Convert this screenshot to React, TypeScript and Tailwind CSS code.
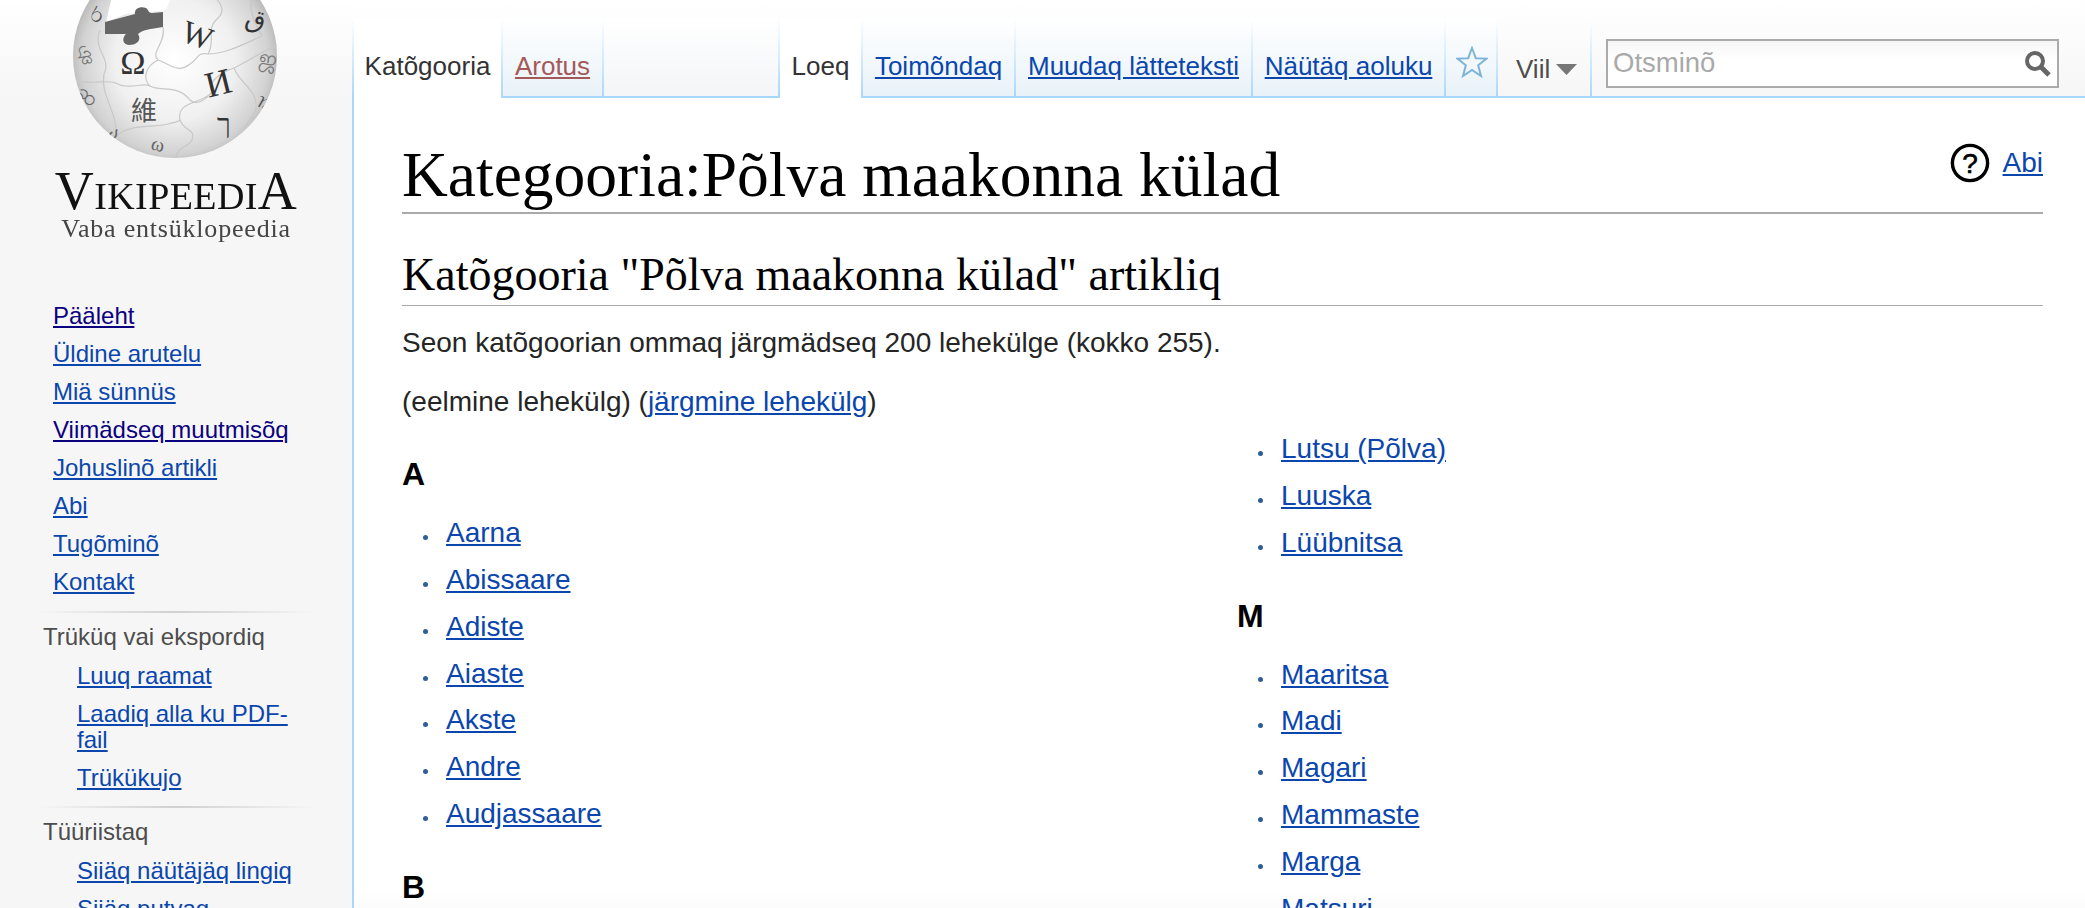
const mainNav = [
  { label: "Pääleht", visited: true },
  { label: "Üldine arutelu" },
  { label: "Miä sünnüs" },
  { label: "Viimädseq muutmisõq", visited: true },
  { label: "Johuslinõ artikli" },
  { label: "Abi" },
  { label: "Tugõminõ" },
  { label: "Kontakt" },
];

const leftColumn = [
  { letter: "A", items: ["Aarna", "Abissaare", "Adiste", "Aiaste", "Akste", "Andre", "Audjassaare"] },
  { letter: "B", items: [] },
];

function Globe() {
  return (
    <svg width="352" height="165" viewBox="0 0 352 165" className="block">
      <defs>
        <radialGradient id="globeFill" cx="0.5" cy="0.52" r="0.54">
          <stop offset="0" stopColor="#ffffff" />
          <stop offset="0.55" stopColor="#f0f0f0" />
          <stop offset="0.85" stopColor="#d2d2d2" />
          <stop offset="1" stopColor="#adadad" />
        </radialGradient>
        <clipPath id="globeClip">
          <circle cx="175" cy="56" r="102" />
        </clipPath>
      </defs>
      <circle cx="175" cy="56" r="102" fill="url(#globeFill)" />
      <g clipPath="url(#globeClip)">
        {/* missing piece on top */}
        <path d="M112 -4 L172 -4 L166 10 L126 14 L106 22 Z" fill="#ffffff" />
        <path
          d="M105 22 L135 14 C134 9 140 6 146 8 C149 10 148 13 152 13 L163 12 L163 27 C150 29 142 30 138 34 C142 40 137 45 129 45 C122 44 122 38 126 34 L105 34 Z"
          fill="#666666"
        />
        <g fill="none" stroke="#c8c8c8" strokeWidth="1.2">
          <path d="M75 80 C95 86 108 78 118 84 C128 90 145 82 150 86 C160 92 178 84 190 100 C196 106 206 100 212 92 C206 82 222 72 234 68 C250 60 268 48 280 44" />
          <path d="M163 27 C166 44 150 52 158 60 C170 64 178 74 190 64 C200 58 196 52 208 54 C224 54 240 46 262 36" />
          <path d="M100 30 C92 50 112 58 104 74 C100 96 118 112 116 136" />
          <path d="M212 92 C204 104 176 100 180 120 C184 132 196 128 192 140 C188 148 176 146 176 160" />
          <path d="M208 54 C216 40 206 30 216 20 C226 12 222 4 214 -4" />
          <path d="M234 68 C240 84 258 90 256 108 C254 120 242 124 240 140" />
          <path d="M158 60 C146 66 142 78 150 86" />
          <path d="M116 136 C130 124 150 128 168 124 C176 122 178 122 180 120" />
          <path d="M262 36 C254 22 248 10 252 -6" />
        </g>
        <g fill="#333333" fontFamily="Liberation Serif, serif" textAnchor="middle">
          <text x="133" y="74" fontSize="34">Ω</text>
          <text x="197" y="46" fontSize="32" transform="rotate(20 197 36)">W</text>
          <text x="218" y="95" fontSize="36" transform="rotate(-14 218 82)">И</text>
          <text x="144" y="120" fontSize="26" fill="#555555" fontFamily="Noto Sans CJK SC, sans-serif">維</text>
          <text x="224" y="133" fontSize="28">ך</text>
          <text x="85" y="62" fontSize="20" fill="#777777" transform="rotate(80 85 55)">ঞ</text>
          <text x="88" y="102" fontSize="22" fill="#666666" transform="rotate(40 88 95)">ဆ</text>
          <text x="256" y="28" fontSize="26" transform="rotate(15 256 20)">ق</text>
          <text x="268" y="66" fontSize="22" fill="#777777" transform="rotate(10 268 58)">ஜ</text>
          <text x="262" y="110" fontSize="20" fill="#555555" transform="rotate(-60 262 102)">ವ</text>
          <text x="158" y="151" fontSize="20" fill="#666666" transform="rotate(15 158 145)">ω</text>
          <text x="115" y="140" fontSize="18" fill="#666666" transform="rotate(40 115 133)">ა</text>
          <text x="96" y="22" fontSize="20" fill="#555555" transform="rotate(-30 96 15)">ර</text>
        </g>
      </g>
    </svg>
  );
}

function Logo() {
  return (
    <div className="h-[280px]">
      <Globe />
      <div className="mt-[3px] flex justify-center items-baseline font-['Liberation_Serif',serif] text-[#111] h-[46px] leading-[46px] tracking-[0.4px] blur-[0.3px]">
        <span className="text-[54px]">V</span>
        <span className="text-[38px]">IKIPEEDI</span>
        <span className="text-[54px]">A</span>
      </div>
      <div className="text-center font-['Liberation_Serif',serif] text-[26px] leading-[30px] text-[#444] tracking-[0.8px] blur-[0.3px]">
        Vaba entsüklopeedia
      </div>
    </div>
  );
}

function NavLink({ label, visited }: { label: string; visited?: boolean }) {
  return (
    <li className="h-[38px] leading-[38px]">
      <a href="#" className={visited ? "underline text-[#0b0080]" : "underline text-[#0a46ad]"}>
        {label}
      </a>
    </li>
  );
}

function Portal({ title, items }: { title: string; items: string[] }) {
  return (
    <div>
      <div className="mx-[37px] h-[2px] w-[279px] bg-linear-to-r from-transparent via-[#d0d0d0] to-transparent" />
      <h3 className="ml-[43px] mt-[11px] h-[26px] leading-[26px] text-[#4d4d4d]">{title}</h3>
      <ul className="ml-[77px] w-[240px] pt-[7px] pb-[9px] leading-[26px]">
        {items.map((item) => (
          <li key={item} className="py-[6px]">
            <a href="#" className="underline text-[#0a46ad]">
              {item}
            </a>
          </li>
        ))}
      </ul>
    </div>
  );
}

function Sidebar() {
  return (
    <aside className="w-[352px] shrink-0 text-[24px] bg-linear-to-b from-white to-[#f6f6f6] to-[100px]">
      <Logo />
      <ul className="ml-[53px] pt-[17px] pb-[10px]">
        {mainNav.map((item) => (
          <NavLink key={item.label} label={item.label} visited={item.visited} />
        ))}
      </ul>
      <Portal title="Trüküq vai ekspordiq" items={["Luuq raamat", "Laadiq alla ku PDF-fail", "Trükükujo"]} />
      <Portal title="Tüüriistaq" items={["Siiäq näütäjäq lingiq", "Siiäq putvaq"]} />
    </aside>
  );
}

function Separator() {
  return <div className="w-[2px] shrink-0 bg-linear-to-b from-white to-[#a7d7f9]" />;
}

function Tab({ label, selected, red, width }: { label: string; selected?: boolean; red?: boolean; width: string }) {
  const bg = selected ? "bg-white" : "bg-linear-to-b from-white to-[#e8f2f8] border-b-2 border-[#a7d7f9]";
  const color = selected ? "text-[#333]" : red ? "text-[#a55858] underline" : "text-[#0a46ad] underline";
  return (
    <div className={`${width} ${bg} h-full shrink-0 pt-[29px] text-center leading-[38px]`}>
      <a href="#" className={color}>
        {label}
      </a>
    </div>
  );
}

function TabBar() {
  return (
    <div className="flex h-[98px] shrink-0 pt-[18px] text-[26px] bg-linear-to-b from-white to-[#f6f6f6]">
      <Separator />
      <Tab label="Katõgooria" selected width="w-[147px]" />
      <Separator />
      <Tab label="Arotus" red width="w-[99px]" />
      <Separator />
      <div className="w-[174px] shrink-0 border-b-2 border-[#a7d7f9] bg-linear-to-b from-white to-[#f3f5f7]" />
      <Separator />
      <Tab label="Loeq" selected width="w-[81px]" />
      <Separator />
      <Tab label="Toimõndaq" width="w-[151px]" />
      <Separator />
      <Tab label="Muudaq lätteteksti" width="w-[235px]" />
      <Separator />
      <Tab label="Näütäq aoluku" width="w-[191px]" />
      <Separator />
      <div className="w-[50px] shrink-0 border-b-2 border-[#a7d7f9] bg-linear-to-b from-white to-[#e8f2f8] pl-[10px] pt-[28px]">
        <svg width="32" height="32" viewBox="0 0 32 32" fill="none" stroke="#7cb5d8" strokeWidth="2">
          <path d="M16 2 L19.8 12.2 L30.5 12.6 L22.2 19.3 L25 30 L16 24 L7 30 L9.8 19.3 L1.5 12.6 L12.2 12.2 Z" />
        </svg>
      </div>
      <Separator />
      <div className="flex w-[92px] shrink-0 border-b-2 border-[#a7d7f9] pl-[18px] pt-[32px] text-[#4d4d4d]">
        <span className="leading-[38px]">Viil</span>
        <svg width="21" height="11" viewBox="0 0 21 11" className="ml-[6px] mt-[14px]">
          <path d="M0 0 H21 L10.5 11 Z" fill="#777777" />
        </svg>
      </div>
      <Separator />
      <div className="flex-1 border-b-2 border-[#a7d7f9] pl-[14px] pr-[26px] pt-[21px]">
        <div className="flex h-[49px] items-center justify-between border-2 border-[#aaaaaa] bg-linear-to-b from-[#f5f5f5] to-white to-[40%] pl-[5px] pr-[6px]">
          <span className="-mt-[2px] text-[27.5px] text-[#a9a9a9]">Otsminõ</span>
          <svg width="27" height="27" viewBox="0 0 27 27" fill="none" stroke="#666666">
            <circle cx="11" cy="11" r="8" strokeWidth="4" />
            <path d="M17 17 L25 25" strokeWidth="5" />
          </svg>
        </div>
      </div>
    </div>
  );
}

function CategoryItem({ label }: { label: string }) {
  return (
    <li className="relative h-[46.85px] pl-[44px] leading-[46.85px]">
      <span className="absolute left-[21px] top-[25px] size-[5px] rounded-full bg-[#2f5f94]" />
      <a href="#" className="underline text-[#0a46ad]">
        {label}
      </a>
    </li>
  );
}

function CategoryGroup({ letter, items }: { letter: string; items: string[] }) {
  return (
    <div>
      <h3 className="mt-[31px] mb-[18px] h-[36px] text-[32px] font-bold leading-[36px] text-black">{letter}</h3>
      <ul>
        {items.map((item) => (
          <CategoryItem key={item} label={item} />
        ))}
      </ul>
    </div>
  );
}

function Content() {
  return (
    <main className="relative flex-1 border-l-2 border-[#a7d7f9] bg-linear-to-b from-white from-95% to-[#f6f6f6] pl-[48px] pr-[42px] text-[28px] text-[#252525]">
      <div className="absolute right-[42px] top-[44px] flex items-center">
        <svg width="40" height="40" viewBox="0 0 40 40" className="mr-[13px]">
          <circle cx="20" cy="20" r="17.6" fill="none" stroke="#000000" strokeWidth="3.4" />
          <text x="20" y="30" fontSize="28" textAnchor="middle" fill="#000000" stroke="#000000" strokeWidth="0.6" fontFamily="Liberation Sans, sans-serif">?</text>
        </svg>
        <a href="#" className="text-[28px] underline text-[#0a46ad]">
          Abi
        </a>
      </div>
      <h1 className="h-[116px] border-b-2 border-[#aaaaaa] pt-[39px] font-['Liberation_Serif',serif] text-[63.5px] leading-[76px] text-black">
        Kategooria:Põlva maakonna külad
      </h1>
      <h2 className="mt-[38px] h-[54px] border-b-[1.5px] border-[#aaaaaa] font-['Liberation_Serif',serif] text-[46px] leading-[46px] text-black">
        Katõgooria "Põlva maakonna külad" artikliq
      </h2>
      <p className="mt-[15px] h-[44px] leading-[44px]">Seon katõgoorian ommaq järgmädseq 200 lehekülge (kokko 255).</p>
      <p className="mt-[15px] h-[44px] leading-[44px]">
        (eelmine lehekülg) (
        <a href="#" className="underline text-[#0a46ad]">
          järgmine lehekülg
        </a>
        )
      </p>
      <div className="mt-[2px] grid grid-cols-[835px_1fr]">
        <div className="-mt-[1px]">
          {leftColumn.map((group) => (
            <CategoryGroup key={group.letter} letter={group.letter} items={group.items} />
          ))}
        </div>
        <div>
          <ul>
            {["Lutsu (Põlva)", "Luuska", "Lüübnitsa"].map((item) => (
              <CategoryItem key={item} label={item} />
            ))}
          </ul>
          <CategoryGroup letter="M" items={["Maaritsa", "Madi", "Magari", "Mammaste", "Marga", "Matsuri"]} />
        </div>
      </div>
    </main>
  );
}

export default function App() {
  return (
    <div className="flex h-[908px] overflow-hidden bg-[#f6f6f6] font-['Liberation_Sans',Arial,sans-serif]">
      <Sidebar />
      <div className="flex min-w-0 flex-1 flex-col">
        <TabBar />
        <Content />
      </div>
    </div>
  );
}
